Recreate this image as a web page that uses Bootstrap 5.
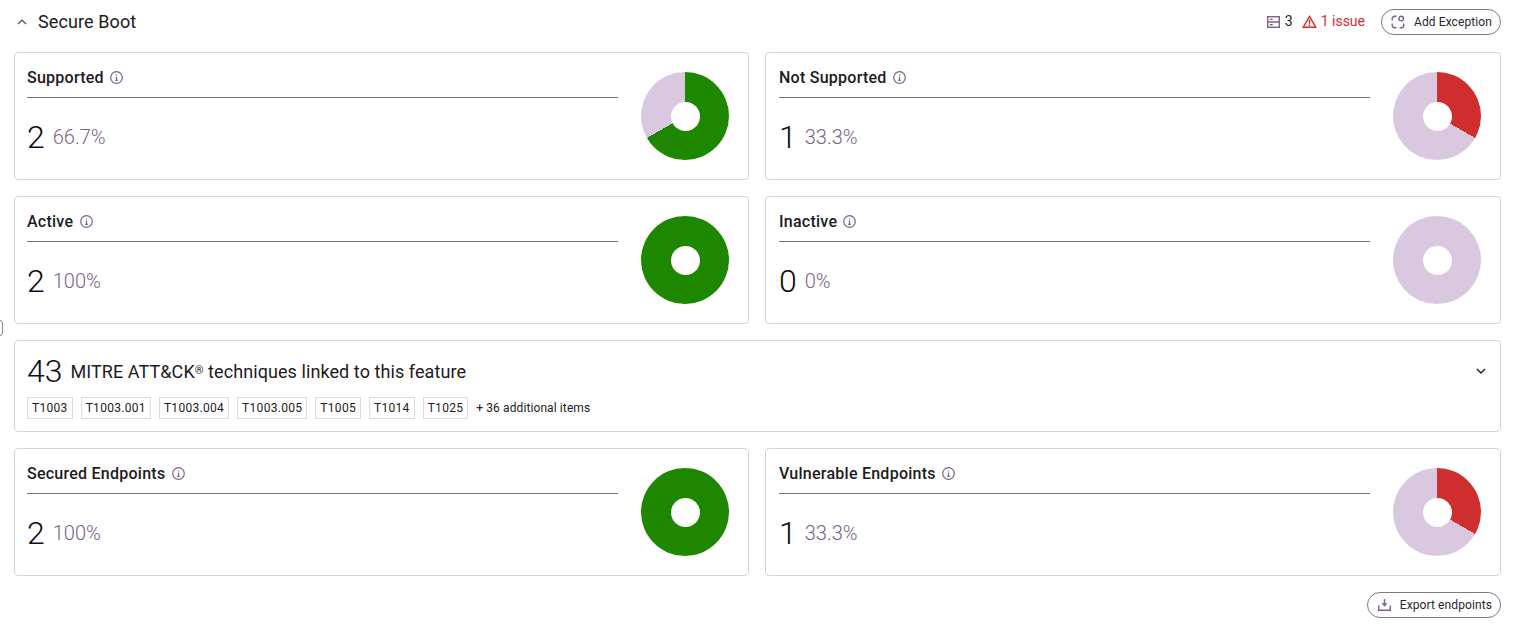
<!DOCTYPE html>
<html lang="en">
<head>
  <meta charset="UTF-8">
  <meta name="viewport" content="width=device-width, initial-scale=1.0">
  <title>Secure Boot</title>
  <link href="https://cdn.jsdelivr.net/npm/bootstrap@5.3.0/dist/css/bootstrap.min.css" rel="stylesheet">
  <style>
    body {
      font-family: "Roboto", "Liberation Sans", sans-serif;
      color: #1d1a21;
      background: #fff;
      overflow: hidden;
    }
    .page-wrap {
      padding: 8px 16px 0 14px;
    }
    .section-head {
      height: 27px;
      margin-bottom: 17px;
      padding-left: 3px;
    }
    .section-title {
      font-size: 18px;
      line-height: 27px;
      letter-spacing: .1px;
      margin: 0 0 0 11px;
      font-weight: 400;
    }
    .head-count { font-size: 14px; margin-left: 5px; }
    .head-gap { margin-left: 9px; }
    .issue-text { font-size: 14px; color: #cf2e2e; margin-left: 4px; }
    .pill-btn {
      height: 26px;
      border: 1px solid #7f7a84;
      border-radius: 13px;
      background: #fff;
      font-size: 12px;
      letter-spacing: .1px;
      color: #2a2630;
      padding: 0 8px 0 9px;
    }
    .pill-icon { margin-right: 9px; }
    .stat-grid {
      display: grid;
      grid-template-columns: 735px 1fr;
      gap: 16px;
    }
    .stat-box {
      height: 128px;
      border: 1px solid #d5d3d8;
      border-radius: 4px;
      padding: 12px 19px 12px 12px;
    }
    .stat-box.right-box { padding-left: 13px; }
    .stat-main { flex: 1; margin-right: 23px; }
    .stat-title {
      font-size: 16px;
      font-weight: 500;
      letter-spacing: .25px;
      line-height: 25px;
      height: 33px;
      border-bottom: 1px solid #77727c;
    }
    .stat-title svg { margin-left: 2px; vertical-align: -1px; stroke-width: 1.2; }
    .stat-value { margin-top: 21px; height: 36px; }
    .big-num { font-size: 32px; font-weight: 300; line-height: 36px; color: #0d0b10; }
    .stat-pct { font-size: 20px; color: #7b6189; margin-left: 8px; font-weight: 300; line-height: 36px; }
    .pie-chart {
      width: 88px;
      height: 88px;
      border-radius: 50%;
      position: relative;
      flex: none;
      margin-top: 7px;
    }
    .pie-chart::after {
      content: "";
      position: absolute;
      left: 29.5px;
      top: 29.5px;
      width: 29px;
      height: 29px;
      border-radius: 50%;
      background: #fff;
    }
    .mitre-box {
      grid-column: 1 / 3;
      height: 92px;
      border: 1px solid #d5d3d8;
      border-radius: 4px;
      padding: 12px 14px 12px 12px;
    }
    .mitre-title { font-size: 18px; letter-spacing: .08px; margin-left: 8px; }
    .reg-mark { font-size: 11px; vertical-align: 4px; }
    .tech-row { margin-top: 8px; gap: 8px; }
    .tech-tag {
      font-size: 12px;
      letter-spacing: .3px;
      line-height: 20px;
      border: 1px solid #dedce0;
      padding: 0 4px;
    }
    .more-items { font-size: 12px; letter-spacing: .1px; }
    .export-row { margin-top: 16px; }
    .export-row .pill-icon { margin-right: 8px; }
    .edge-mark {
      position: absolute;
      left: -5px;
      top: 320px;
      width: 8px;
      height: 16px;
      border: 1px solid #8b8790;
      border-radius: 3px;
    }
  </style>
</head>
<body>
  <div class="edge-mark"></div>
  <div class="page-wrap">
    <div class="section-head d-flex align-items-center justify-content-between">
      <div class="d-flex align-items-center">
        <svg width="10" height="6" viewBox="0 0 10 6" fill="none" stroke="#4a4550" stroke-width="1.1"><path d="M1 5l4-4 4 4"/></svg>
        <h1 class="section-title">Secure Boot</h1>
      </div>
      <div class="d-flex align-items-center">
        <svg width="13" height="12" viewBox="0 0 13 12" fill="none" stroke="#7b6189" stroke-width="1.4"><rect x=".7" y=".7" width="11.6" height="10.6"/><path d="M.7 6h11.6M2.8 3.4h3M2.8 8.7h3"/></svg>
        <span class="head-count">3</span>
        <svg class="head-gap" width="15" height="13" viewBox="0 0 15 13" fill="none" stroke="#cf2e2e" stroke-width="1.4"><path d="M7.5 1.4L13.8 12.3H1.2z"/><path d="M7.5 4.4v4.4M7.5 9.6v1.4" stroke-width="1.6"/></svg>
        <span class="issue-text">1 issue</span>
        <button type="button" class="pill-btn d-flex align-items-center ms-3">
          <svg class="pill-icon" width="14" height="14" viewBox="0 0 14 14" fill="none" stroke="#7b6189" stroke-width="1.4"><circle cx="10.2" cy="3.6" r="2.3"/><path d="M5.4 1.3H3.6a2.4 2.4 0 0 0-2.4 2.4v1.7M5.4 12.7H3.6a2.4 2.4 0 0 1-2.4-2.4V8.6M8.6 12.7h1.8a2.4 2.4 0 0 0 2.4-2.4V8.6"/></svg>
          Add Exception
        </button>
      </div>
    </div>

    <div class="stat-grid">
      <div class="stat-box d-flex">
        <div class="stat-main">
          <div class="stat-title">Supported <svg width="13" height="13" viewBox="0 0 13 13" fill="none" stroke="#7b6189"><circle cx="6.5" cy="6.5" r="5.8"/><path d="M6.5 5.6v3.6M6.5 3.4v1.1M5.2 9.3h2.6"/></svg></div>
          <div class="stat-value d-flex align-items-center"><span class="big-num">2</span><span class="stat-pct">66.7%</span></div>
        </div>
        <div class="pie-chart" style="background:conic-gradient(#1e8700 0 240deg,#dac8e0 240deg 360deg)"></div>
      </div>
      <div class="stat-box right-box d-flex">
        <div class="stat-main">
          <div class="stat-title">Not Supported <svg width="13" height="13" viewBox="0 0 13 13" fill="none" stroke="#7b6189"><circle cx="6.5" cy="6.5" r="5.8"/><path d="M6.5 5.6v3.6M6.5 3.4v1.1M5.2 9.3h2.6"/></svg></div>
          <div class="stat-value d-flex align-items-center"><span class="big-num">1</span><span class="stat-pct">33.3%</span></div>
        </div>
        <div class="pie-chart" style="background:conic-gradient(#cf2e2e 0 120deg,#dac8e0 120deg 360deg)"></div>
      </div>
      <div class="stat-box d-flex">
        <div class="stat-main">
          <div class="stat-title">Active <svg width="13" height="13" viewBox="0 0 13 13" fill="none" stroke="#7b6189"><circle cx="6.5" cy="6.5" r="5.8"/><path d="M6.5 5.6v3.6M6.5 3.4v1.1M5.2 9.3h2.6"/></svg></div>
          <div class="stat-value d-flex align-items-center"><span class="big-num">2</span><span class="stat-pct">100%</span></div>
        </div>
        <div class="pie-chart" style="background:#1e8700"></div>
      </div>
      <div class="stat-box right-box d-flex">
        <div class="stat-main">
          <div class="stat-title">Inactive <svg width="13" height="13" viewBox="0 0 13 13" fill="none" stroke="#7b6189"><circle cx="6.5" cy="6.5" r="5.8"/><path d="M6.5 5.6v3.6M6.5 3.4v1.1M5.2 9.3h2.6"/></svg></div>
          <div class="stat-value d-flex align-items-center"><span class="big-num">0</span><span class="stat-pct">0%</span></div>
        </div>
        <div class="pie-chart" style="background:#dac8e0"></div>
      </div>

      <div class="mitre-box">
        <div class="d-flex align-items-center justify-content-between">
          <div class="d-flex align-items-center"><span class="big-num">43</span><span class="mitre-title">MITRE ATT&amp;CK<span class="reg-mark">®</span> techniques linked to this feature</span></div>
          <svg width="10" height="6" viewBox="0 0 10 6" fill="none" stroke="#1d1a21" stroke-width="1.4"><path d="M1 1l4 4 4-4"/></svg>
        </div>
        <div class="tech-row d-flex align-items-center">
          <span class="tech-tag">T1003</span>
          <span class="tech-tag">T1003.001</span>
          <span class="tech-tag">T1003.004</span>
          <span class="tech-tag">T1003.005</span>
          <span class="tech-tag">T1005</span>
          <span class="tech-tag">T1014</span>
          <span class="tech-tag">T1025</span>
          <span class="more-items">+ 36 additional items</span>
        </div>
      </div>

      <div class="stat-box d-flex">
        <div class="stat-main">
          <div class="stat-title">Secured Endpoints <svg width="13" height="13" viewBox="0 0 13 13" fill="none" stroke="#7b6189"><circle cx="6.5" cy="6.5" r="5.8"/><path d="M6.5 5.6v3.6M6.5 3.4v1.1M5.2 9.3h2.6"/></svg></div>
          <div class="stat-value d-flex align-items-center"><span class="big-num">2</span><span class="stat-pct">100%</span></div>
        </div>
        <div class="pie-chart" style="background:#1e8700"></div>
      </div>
      <div class="stat-box right-box d-flex">
        <div class="stat-main">
          <div class="stat-title">Vulnerable Endpoints <svg width="13" height="13" viewBox="0 0 13 13" fill="none" stroke="#7b6189"><circle cx="6.5" cy="6.5" r="5.8"/><path d="M6.5 5.6v3.6M6.5 3.4v1.1M5.2 9.3h2.6"/></svg></div>
          <div class="stat-value d-flex align-items-center"><span class="big-num">1</span><span class="stat-pct">33.3%</span></div>
        </div>
        <div class="pie-chart" style="background:conic-gradient(#cf2e2e 0 120deg,#dac8e0 120deg 360deg)"></div>
      </div>
    </div>

    <div class="export-row d-flex justify-content-end">
      <button type="button" class="pill-btn d-flex align-items-center">
        <svg class="pill-icon" width="15" height="14" viewBox="0 0 15 14" fill="#7b6189" stroke="none"><path d="M6.8 1h1.4v4.2h2.3L7.5 8.8 4.500 5.200h2.300z"/><path d="M1 7.500h1.400v4.100h10.200V7.500H14V13H1z"/></svg>
        Export endpoints
      </button>
    </div>
  </div>
  <script src="https://cdn.jsdelivr.net/npm/bootstrap@5.3.0/dist/js/bootstrap.bundle.min.js"></script>
</body>
</html>
